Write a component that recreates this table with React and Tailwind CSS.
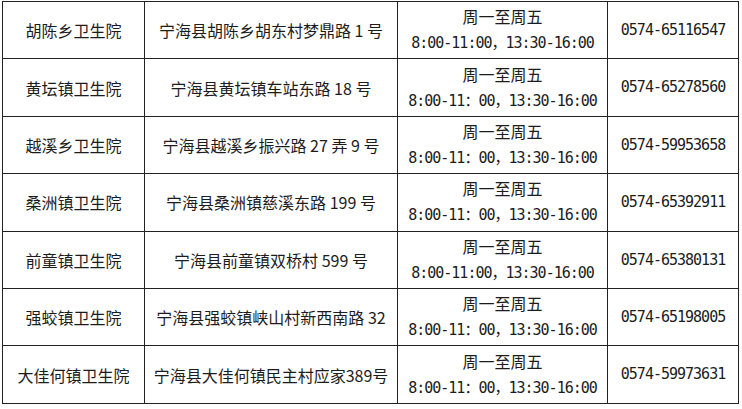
import React from "react";

const rows = [
  { name: "胡陈乡卫生院", addr: "宁海县胡陈乡胡东村梦鼎路 1 号", time: "8:00-11:00，13:30-16:00", tel: "0574-65116547" },
  { name: "黄坛镇卫生院", addr: "宁海县黄坛镇车站东路 18 号", time: "8:00-11：00，13:30-16:00", tel: "0574-65278560" },
  { name: "越溪乡卫生院", addr: "宁海县越溪乡振兴路 27 弄 9 号", time: "8:00-11：00，13:30-16:00", tel: "0574-59953658" },
  { name: "桑洲镇卫生院", addr: "宁海县桑洲镇慈溪东路 199 号", time: "8:00-11：00，13:30-16:00", tel: "0574-65392911" },
  { name: "前童镇卫生院", addr: "宁海县前童镇双桥村 599 号", time: "8:00-11:00，13:30-16:00", tel: "0574-65380131" },
  { name: "强蛟镇卫生院", addr: "宁海县强蛟镇峡山村新西南路 32", time: "8:00-11：00，13:30-16:00", tel: "0574-65198005" },
  { name: "大佳何镇卫生院", addr: "宁海县大佳何镇民主村应家389号", time: "8:00-11：00，13:30-16:00", tel: "0574-59973631" },
];

const App = () => {
  return (
    <div className="w-[742px] h-[409px] bg-white pt-[1px] pl-[2px] overflow-hidden">
      <table className="border-collapse text-[#1c1c1c] font-['Noto_Sans_CJK_SC',sans-serif]">
        <tbody>
          {rows.map((r) => (
            <tr key={r.name} className="h-[57.4px]">
              <td className="w-[142px] border border-[#222] text-center text-[16px]">
                {r.name}
              </td>
              <td className="w-[253px] border border-[#222] text-center text-[16px]">
                {r.addr}
              </td>
              <td className="w-[210px] border border-[#222] text-center p-0">
                <div className="text-[16px] leading-[27px]">周一至周五</div>
                <div className="text-[15px] leading-[27px] tracking-[-1px] font-['DejaVu_Sans_Mono','Noto_Sans_CJK_SC',monospace]">
                  {r.time}
                </div>
              </td>
              <td className="w-[131px] border border-[#222] text-center text-[15px] tracking-[-1px] font-['DejaVu_Sans_Mono','Noto_Sans_CJK_SC',monospace]">
                {r.tel}
              </td>
            </tr>
          ))}
        </tbody>
      </table>
    </div>
  );
};

export default App;
